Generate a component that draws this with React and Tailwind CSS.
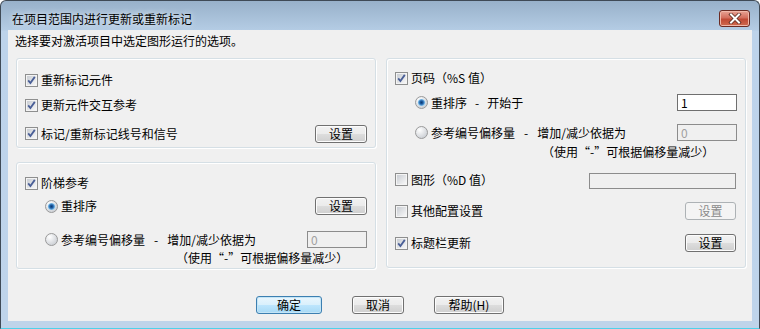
import React from "react";

function Check({ checked }) {
  return (
    <svg width="13" height="13" viewBox="0 0 13 13" className="shrink-0">
      <defs>
        <linearGradient id="cbg" x1="0" y1="0" x2="1" y2="1">
          <stop offset="0" stopColor="#c9cdd3" />
          <stop offset="1" stopColor="#f7f7f7" />
        </linearGradient>
      </defs>
      <rect x="0.5" y="0.5" width="12" height="12" fill="#f4f4f4" stroke="#8e8f8f" />
      <rect x="2" y="2" width="9" height="9" fill="url(#cbg)" />
      {checked && (
        <path d="M3.2 6.4 L5.4 9 L9.8 2.9" fill="none" stroke="#4a5f97" strokeWidth="1.8" />
      )}
    </svg>
  );
}

function Radio({ on }) {
  return (
    <svg width="13" height="13" viewBox="0 0 13 13" className="shrink-0">
      <defs>
        <radialGradient id="rbg" cx="0.35" cy="0.3" r="0.8">
          <stop offset="0" stopColor="#ffffff" />
          <stop offset="1" stopColor="#c6cad0" />
        </radialGradient>
        <radialGradient id="rdot" cx="0.5" cy="0.5" r="0.5">
          <stop offset="0" stopColor="#0d3a70" />
          <stop offset="0.45" stopColor="#1d5ea6" />
          <stop offset="1" stopColor="#8fcdf4" />
        </radialGradient>
      </defs>
      <circle cx="6.5" cy="6.5" r="6" fill="url(#rbg)" stroke="#9a9a9a" />
      {on && <circle cx="6.5" cy="6.5" r="3.6" fill="url(#rdot)" />}
    </svg>
  );
}

function Btn({ className = "", children, disabled, def }) {
  let cls;
  if (disabled) cls = "border-[#adb2b5] bg-[#f4f4f4] text-[#8a8a8a]";
  else if (def)
    cls =
      "border-[#3c7fb1] bg-[linear-gradient(180deg,#eaf6fd_0%,#d9f0fc_50%,#bee6fd_50%,#a7d9f5_100%)] shadow-[inset_0_0_0_1px_#c4e5f6] text-black";
  else
    cls =
      "border-[#707070] bg-[linear-gradient(180deg,#f2f2f2_0%,#ebebeb_50%,#dddddd_50%,#cfcfcf_100%)] shadow-[inset_0_0_0_1px_#fcfcfc] text-black";
  return (
    <div
      className={`flex items-center justify-center rounded-[3px] border text-[12px] leading-none shrink-0 ${cls} ${className}`}
    >
      {children}
    </div>
  );
}

function Field({ className = "", value, disabled }) {
  return (
    <div
      className={`flex items-center pl-[3px] border text-[12px] leading-none shrink-0 ${
        disabled ? "bg-[#f0f0f0] border-[#8c8c8c] text-[#a0a0a0]" : "bg-white border-[#6f6f6f] text-black"
      } ${className}`}
    >
      {value}
    </div>
  );
}

function CheckLabel({ checked, children }) {
  return (
    <div className="flex items-center gap-[3px]">
      <Check checked={checked} />
      <span>{children}</span>
    </div>
  );
}

function RadioLabel({ on, children }) {
  return (
    <div className="flex items-center gap-[3px]">
      <Radio on={on} />
      <span>{children}</span>
    </div>
  );
}

const group =
  "border border-[#d5dfe5] rounded-[3px] shadow-[inset_1px_1px_0_#ffffff,1px_1px_0_#ffffff] flex flex-col pl-[8px] pr-[8px]";

export default function App() {
  return (
    <div className="w-[760px] h-[329px] flex flex-col overflow-hidden rounded-t-[6px] border border-[#3f4a56] border-b-[#4fd2ea] bg-[linear-gradient(180deg,#98b1ca_0px,#b4cce4_29px,#bdd3ea_30px,#bfd4ea_100%)] font-['Noto_Sans_CJK_SC',sans-serif] text-[12px] leading-[14px] text-black">
      {/* Title bar */}
      <div className="h-[29px] shrink-0 flex items-center justify-between pt-[6px] pl-[11px] pr-[9px]">
        <span className="text-[12px] text-black [text-shadow:0_0_6px_#ffffff]">在项目范围内进行更新或重新标记</span>
        <div className="w-[31px] h-[17px] rounded-[3px] border border-[#6b2b23] bg-[linear-gradient(180deg,#e8a395_0%,#d46f5e_45%,#c04a36_55%,#cf6b4f_100%)] shadow-[inset_0_0_0_1px_#f0b8aa] flex items-center justify-center">
          <svg width="14" height="11" viewBox="0 0 14 11">
            <path d="M3 1.5 L11 9.5 M11 1.5 L3 9.5" stroke="#5a2a20" strokeWidth="3.6" strokeLinecap="square" />
            <path d="M3 1.5 L11 9.5 M11 1.5 L3 9.5" stroke="#ffffff" strokeWidth="2" strokeLinecap="square" />
          </svg>
        </div>
      </div>

      {/* Client area */}
      <div className="ml-[7px] w-[744px] h-[291px] shrink-0 bg-[#f0f0f0] flex flex-col">
        <div className="pl-[7px] pt-[4px] h-[18px]">选择要对激活项目中选定图形运行的选项。</div>

        <div className="mt-[10px] pl-[8px] flex gap-[10px] items-start">
          {/* Left column */}
          <div className="w-[360px] flex flex-col gap-[14px]">
            <div className={`${group} h-[90px]`}>
              <div className="mt-[12px] h-[18px] flex items-center">
                <CheckLabel checked>重新标记元件</CheckLabel>
              </div>
              <div className="mt-[7px] h-[18px] flex items-center">
                <CheckLabel checked>更新元件交互参考</CheckLabel>
              </div>
              <div className="mt-[10px] h-[19px] flex items-center justify-between">
                <CheckLabel checked>标记/重新标记线号和信号</CheckLabel>
                <Btn className="w-[52px] h-[18px]">设置</Btn>
              </div>
            </div>

            <div className={`${group} h-[107px]`}>
              <div className="mt-[11px] h-[18px] flex items-center">
                <CheckLabel checked>阶梯参考</CheckLabel>
              </div>
              <div className="mt-[5px] h-[18px] flex items-center justify-between pl-[20px]">
                <RadioLabel on>重排序</RadioLabel>
                <Btn className="w-[52px] h-[18px]">设置</Btn>
              </div>
              <div className="mt-[16px] h-[17px] flex items-center justify-between pl-[20px]">
                <RadioLabel>
                  参考编号偏移量<span className="mx-[9px]">-</span>增加/减少依据为
                </RadioLabel>
                <Field className="w-[60px] h-[17px]" value="0" disabled />
              </div>
              <div className="mt-[2px] h-[16px] pl-[151px] flex items-center">（使用“-”可根据偏移量减少）</div>
            </div>
          </div>

          {/* Right column */}
          <div className={`${group} w-[360px] h-[210px]`}>
            <div className="mt-[10px] h-[18px] flex items-center">
              <CheckLabel checked>页码（%S 值）</CheckLabel>
            </div>
            <div className="mt-[7px] h-[17px] flex items-center justify-between pl-[20px]">
              <RadioLabel on>
                重排序<span className="mx-[8px]">-</span>开始于
              </RadioLabel>
              <Field className="w-[60px] h-[17px]" value="1" />
            </div>
            <div className="mt-[13px] h-[17px] flex items-center justify-between pl-[20px]">
              <RadioLabel>
                参考编号偏移量<span className="mx-[9px]">-</span>增加/减少依据为
              </RadioLabel>
              <Field className="w-[60px] h-[17px]" value="0" disabled />
            </div>
            <div className="mt-[3px] h-[16px] pl-[147px] flex items-center">（使用“-”可根据偏移量减少）</div>
            <div className="mt-[13px] h-[16px] flex items-start justify-between">
              <div className="h-[13px] flex items-center">
                <CheckLabel>图形（%D 值）</CheckLabel>
              </div>
              <Field className="w-[147px] h-[16px] mr-[1px]" value="" disabled />
            </div>
            <div className="mt-[13px] h-[18px] flex items-center justify-between">
              <CheckLabel>其他配置设置</CheckLabel>
              <Btn className="w-[51px] h-[18px] mr-[1px]" disabled>
                设置
              </Btn>
            </div>
            <div className="mt-[14px] h-[18px] flex items-center justify-between">
              <CheckLabel checked>标题栏更新</CheckLabel>
              <Btn className="w-[51px] h-[18px] mr-[1px]">设置</Btn>
            </div>
          </div>
        </div>

        {/* Bottom buttons */}
        <div className="mt-[27px] flex justify-center gap-[30px]">
          <Btn className="w-[66px] h-[18px]" def>
            确定
          </Btn>
          <Btn className="w-[52px] h-[18px]">取消</Btn>
          <Btn className="w-[70px] h-[18px]">帮助(H)</Btn>
        </div>
      </div>
    </div>
  );
}
